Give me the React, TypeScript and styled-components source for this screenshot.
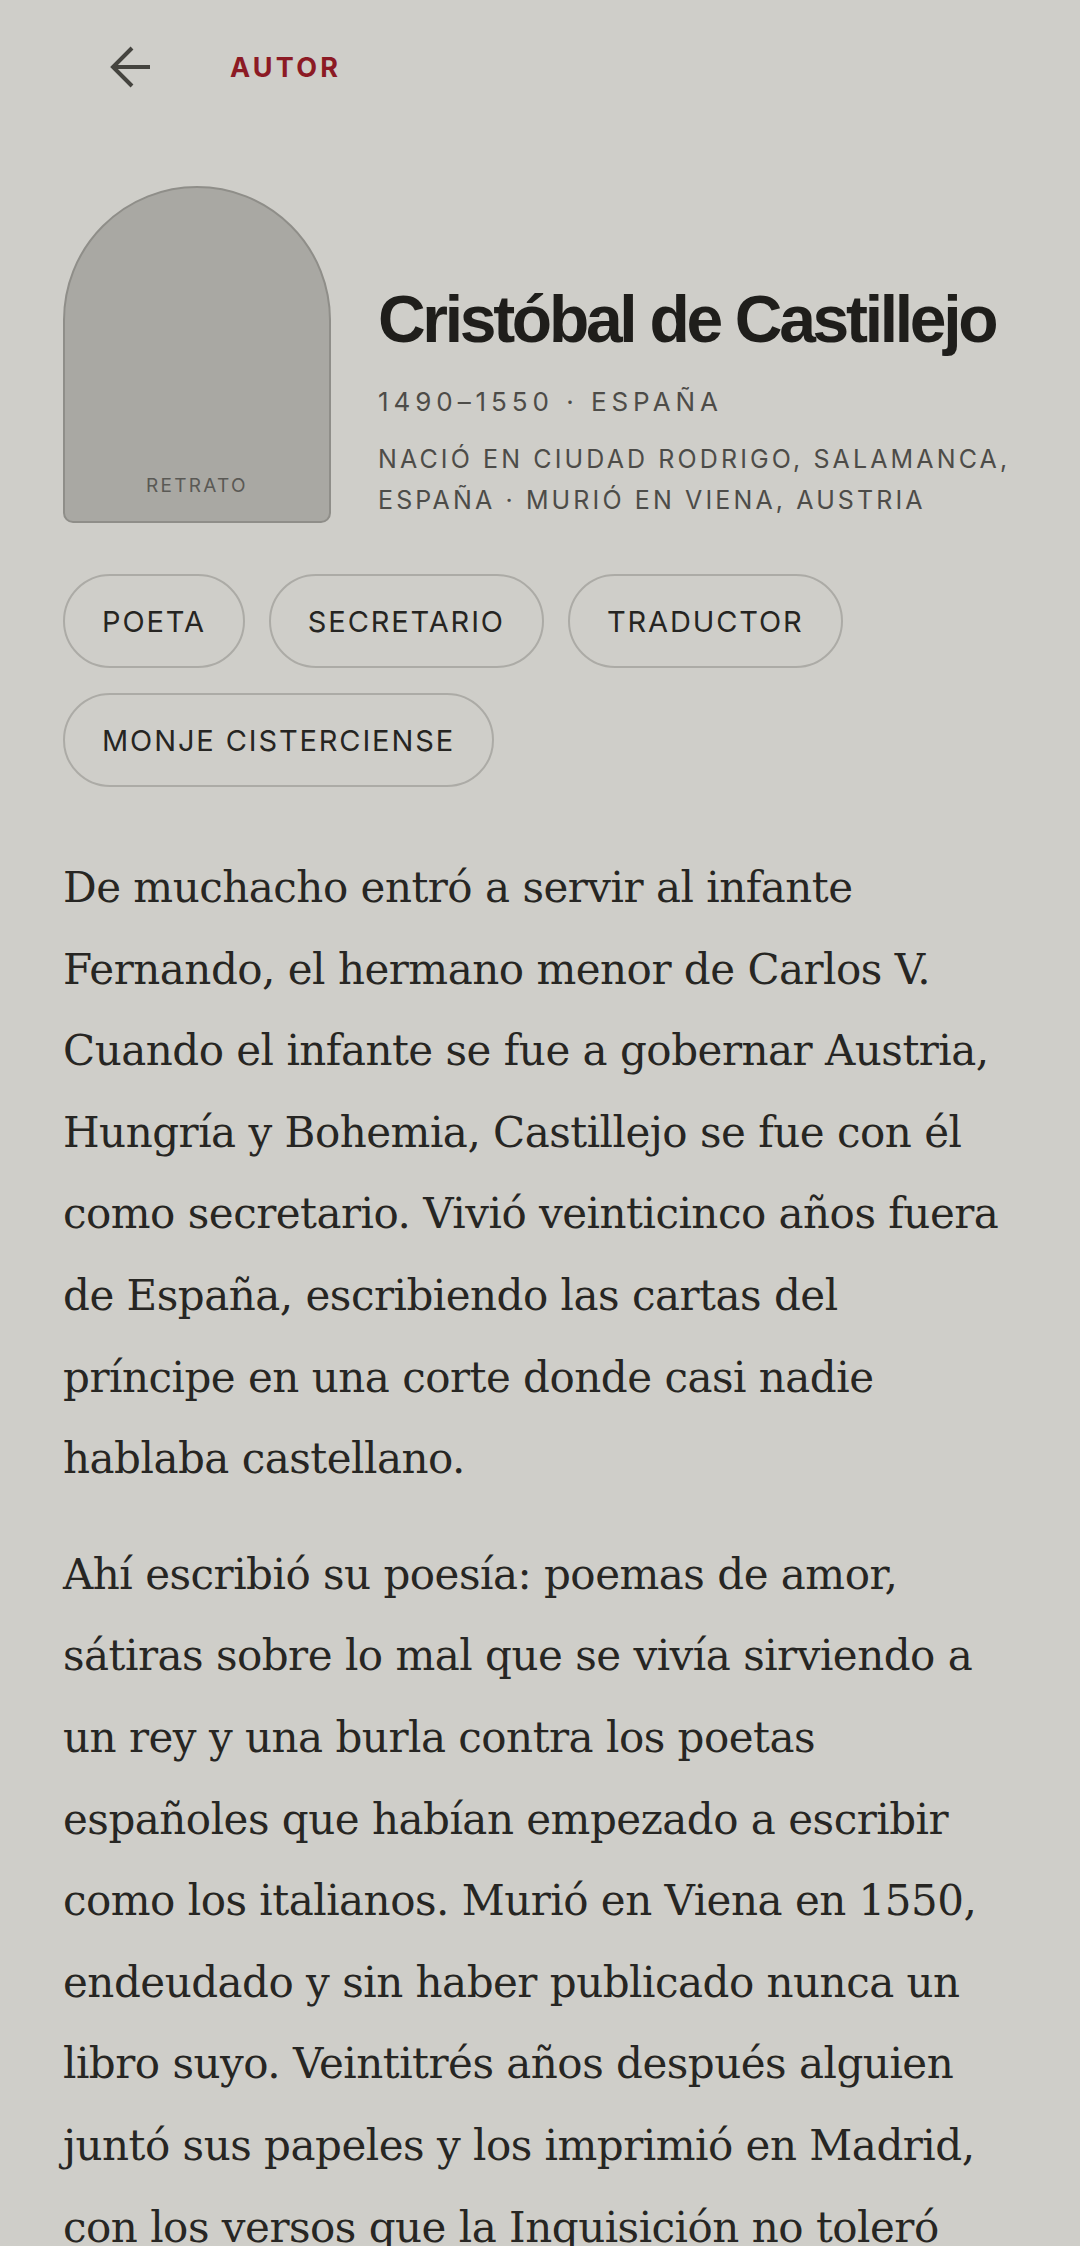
import styled, { createGlobalStyle } from "styled-components";

const GlobalStyle = createGlobalStyle`
  html, body {
    margin: 0;
    padding: 0;
    background: #cfcec9;
  }
  * {
    box-sizing: border-box;
  }
`;

const roles = ["POETA", "SECRETARIO", "TRADUCTOR", "MONJE CISTERCIENSE"];

const paragraphs = [
  "De muchacho entró a servir al infante Fernando, el hermano menor de Carlos V. Cuando el infante se fue a gobernar Austria, Hungría y Bohemia, Castillejo se fue con él como secretario. Vivió veinticinco años fuera de España, escribiendo las cartas del príncipe en una corte donde casi nadie hablaba castellano.",
  "Ahí escribió su poesía: poemas de amor, sátiras sobre lo mal que se vivía sirviendo a un rey y una burla contra los poetas españoles que habían empezado a escribir como los italianos. Murió en Viena en 1550, endeudado y sin haber publicado nunca un libro suyo. Veintitrés años después alguien juntó sus papeles y los imprimió en Madrid, con los versos que la Inquisición no toleró quitados.",
];

const BackArrow = () => (
  <svg width="44" height="44" viewBox="0 0 44 44" fill="none" stroke="#45443f" strokeWidth="4">
    <path d="M42 22H5" />
    <path d="M24 3L5 22L24 41" />
  </svg>
);

const App = () => {
  return (
    <Page>
      <GlobalStyle />
      <Header>
        <BackButton aria-label="Volver">
          <BackArrow />
        </BackButton>
        <HeaderTitle>AUTOR</HeaderTitle>
      </Header>
      <Content>
        <Hero>
          <Portrait>
            <span>RETRATO</span>
          </Portrait>
          <HeroText>
            <Name>Cristóbal de Castillejo</Name>
            <Dates>1490–1550 · ESPAÑA</Dates>
            <Places>NACIÓ EN CIUDAD RODRIGO, SALAMANCA, ESPAÑA · MURIÓ EN VIENA, AUSTRIA</Places>
          </HeroText>
        </Hero>
        <Roles>
          {roles.map(role => (
            <Pill key={role}>{role}</Pill>
          ))}
        </Roles>
        <Bio>
          {paragraphs.map((p, i) => (
            <p key={i}>{p}</p>
          ))}
        </Bio>
      </Content>
    </Page>
  );
};

const Page = styled.div`
  min-height: 2246px;
  background: #cfcec9;
  color: #262522;
`;

const Header = styled.header`
  display: flex;
  align-items: center;
  gap: 56px;
  height: 134px;
  padding: 0 86px;
`;

const BackButton = styled.button`
  display: flex;
  align-items: center;
  justify-content: center;
  width: 88px;
  height: 88px;
  padding: 0;
  border: none;
  background: transparent;
`;

const HeaderTitle = styled.h1`
  margin: 0;
  font-family: Inter, "Liberation Sans", sans-serif;
  font-size: 27px;
  font-weight: 700;
  letter-spacing: 0.12em;
  color: #8c1a24;
`;

const Content = styled.main`
  padding: 52px 63px 0;
`;

const Hero = styled.section`
  display: flex;
  align-items: flex-end;
  gap: 47px;
`;

const Portrait = styled.div`
  flex: none;
  display: flex;
  align-items: flex-end;
  justify-content: center;
  width: 268px;
  height: 337px;
  padding-bottom: 24px;
  background: #a9a8a3;
  border: 2px solid #8f8e89;
  border-radius: 134px 134px 10px 10px;

  span {
    font-family: Inter, "Liberation Sans", sans-serif;
    font-size: 19px;
    letter-spacing: 0.12em;
    color: #5a5955;
  }
`;

const HeroText = styled.div`
  display: flex;
  flex-direction: column;
  padding-bottom: 2px;
`;

const Name = styled.h2`
  margin: 0 0 30px;
  font-family: "Liberation Sans", Arial, sans-serif;
  font-size: 66px;
  font-weight: 700;
  letter-spacing: -0.05em;
  line-height: 1.1;
  color: #1f1e1b;
`;

const Dates = styled.div`
  margin-bottom: 22px;
  font-family: Inter, "Liberation Sans", sans-serif;
  font-size: 26px;
  letter-spacing: 0.19em;
  color: #4d4c48;
`;

const Places = styled.div`
  font-family: Inter, "Liberation Sans", sans-serif;
  font-size: 25px;
  line-height: 41px;
  letter-spacing: 0.125em;
  color: #4d4c48;
`;

const Roles = styled.div`
  display: flex;
  flex-wrap: wrap;
  gap: 25px 24px;
  margin-top: 51px;
`;

const Pill = styled.span`
  display: inline-flex;
  align-items: center;
  height: 94px;
  padding: 0 37px;
  border: 2.5px solid #acaba6;
  border-radius: 47px;
  font-family: Inter, "Liberation Sans", sans-serif;
  font-size: 29px;
  letter-spacing: 0.065em;
  color: #262522;
`;

const Bio = styled.article`
  margin-top: 60px;

  p {
    margin: 0 0 34px;
    font-family: "DejaVu Serif", "Liberation Serif", serif;
    font-size: 42px;
    letter-spacing: -0.012em;
    line-height: 81.6px;
    color: #272623;
  }
`;

export default App;
